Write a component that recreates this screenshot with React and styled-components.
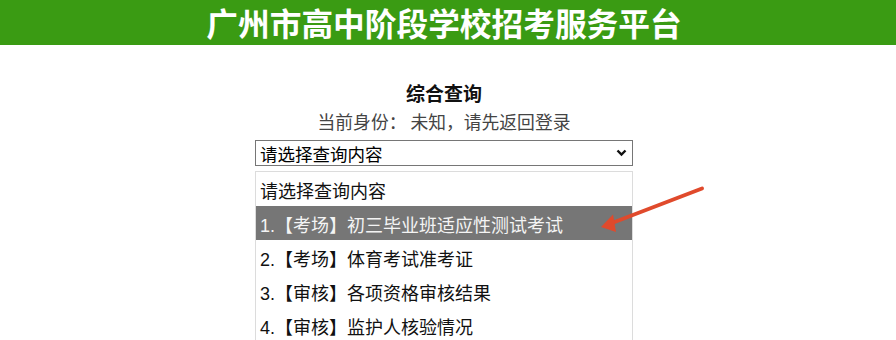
import React from "react";
import styled, { createGlobalStyle } from "styled-components";

const Global = createGlobalStyle`
  html, body { margin: 0; padding: 0; background: #fff; overflow: hidden; }
  body { font-family: "Liberation Sans", "Noto Sans CJK SC", sans-serif; }
`;

const Page = styled.div`
  position: relative;
`;

const Header = styled.header`
  height: 45px;
  background: #3a9b13;
  display: flex;
  align-items: center;
  justify-content: center;
  padding-right: 8px;
`;

const HeaderTitle = styled.h1`
  margin: 0;
  color: #fff;
  font-family: "Noto Sans CJK SC", sans-serif;
  font-weight: 700;
  font-size: 31.7px;
  line-height: 45px;
  letter-spacing: 0;
  white-space: nowrap;
`;

const Main = styled.main`
  display: flex;
  flex-direction: column;
  align-items: center;
  padding-top: 35px;
  padding-right: 8px;
`;

const Title = styled.h2`
  margin: 0;
  font-family: "Noto Sans CJK SC", sans-serif;
  font-size: 19px;
  font-weight: 700;
  line-height: 26px;
  color: #111;
`;

const Subtitle = styled.p`
  margin: 3px 0 0;
  font-family: "Noto Sans CJK SC", sans-serif;
  font-size: 17.8px;
  font-weight: 400;
  line-height: 24px;
  color: #444;
  white-space: pre;
`;

const Column = styled.div`
  width: 378px;
  margin-top: 7px;
  display: flex;
  flex-direction: column;
  gap: 5px;
`;

const SelectBox = styled.div`
  box-sizing: border-box;
  height: 26px;
  border: 1px solid #767676;
  display: flex;
  align-items: center;
  justify-content: space-between;
  padding: 0 5px 0 4px;
  font-size: 17.5px;
  color: #000;
  font-family: "Liberation Sans", "Noto Sans CJK SC", sans-serif;
`;

const List = styled.ul`
  box-sizing: border-box;
  margin: 0;
  padding: 0;
  list-style: none;
  border: 1px solid #dcdcdc;
  border-bottom: none;
`;

const Option = styled.li`
  height: 34px;
  display: flex;
  align-items: center;
  padding: 2px 0 0 4px;
  box-sizing: border-box;
  font-size: 18px;
  font-family: "Liberation Sans", "Noto Sans CJK SC", sans-serif;
  color: ${(p) => (p.$active ? "#f4f4f4" : "#111")};
  background: ${(p) => (p.$active ? "#767676" : "transparent")};
`;

const Pointer = styled.svg`
  position: absolute;
  left: 595px;
  top: 180px;
  pointer-events: none;
`;

const options = [
  "请选择查询内容",
  "1.【考场】初三毕业班适应性测试考试",
  "2.【考场】体育考试准考证",
  "3.【审核】各项资格审核结果",
  "4.【审核】监护人核验情况",
];

export default function App() {
  return (
    <Page>
      <Global />
      <Header>
        <HeaderTitle>广州市高中阶段学校招考服务平台</HeaderTitle>
      </Header>
      <Main>
        <Title>综合查询</Title>
        <Subtitle>{"当前身份： 未知，请先返回登录"}</Subtitle>
        <Column>
          <SelectBox>
            <span>请选择查询内容</span>
            <svg width="11" height="8" viewBox="0 0 11 8">
              <path d="M1.5 1.5 L5.5 5.5 L9.5 1.5" fill="none" stroke="#111" strokeWidth="2.4" />
            </svg>
          </SelectBox>
          <List>
            {options.map((o, i) => (
              <Option key={o} $active={i === 1}>
                {o}
              </Option>
            ))}
          </List>
        </Column>
      </Main>
      <Pointer width="120" height="60" viewBox="595 180 120 60">
        <line x1="702" y1="188.5" x2="612" y2="223" stroke="#e04a2c" strokeWidth="4" strokeLinecap="round" />
        <polygon points="601,227 613,214.5 616,232" fill="#e04a2c" />
      </Pointer>
    </Page>
  );
}
